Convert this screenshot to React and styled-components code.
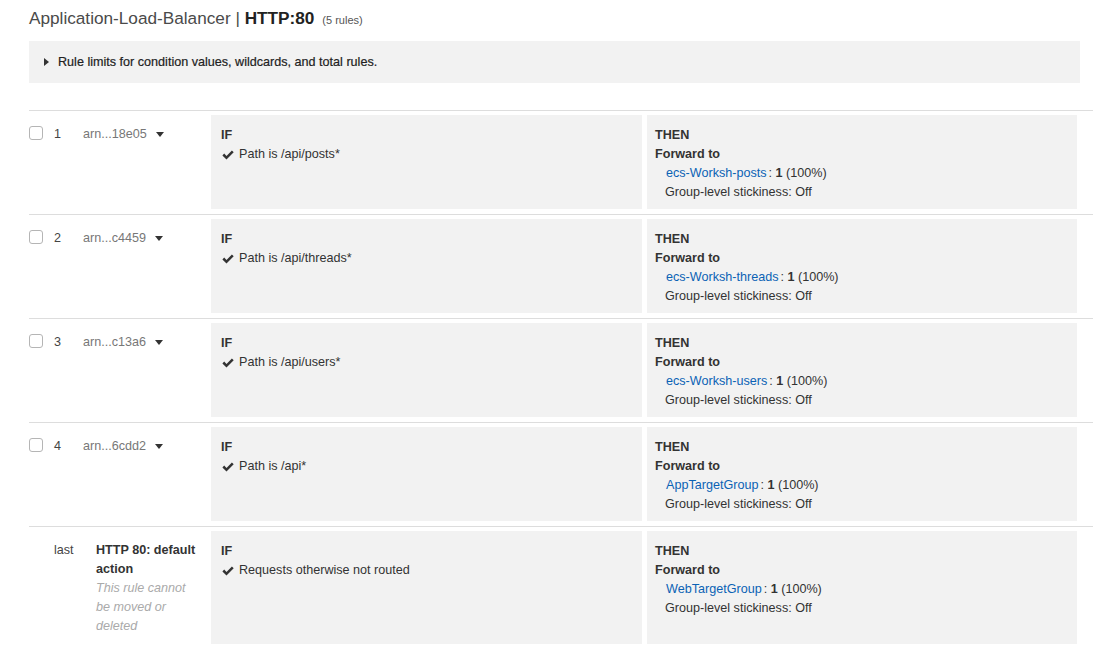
import styled, { createGlobalStyle } from "styled-components";

const GlobalStyle = createGlobalStyle`
  body {
    margin: 0;
    background: #fff;
    font-family: "Liberation Sans", Arial, Helvetica, sans-serif;
    color: #333;
  }
`;

const rules = [
  { num: "1", arn: "arn...18e05", path: "Path is /api/posts*", target: "ecs-Worksh-posts" },
  { num: "2", arn: "arn...c4459", path: "Path is /api/threads*", target: "ecs-Worksh-threads" },
  { num: "3", arn: "arn...c13a6", path: "Path is /api/users*", target: "ecs-Worksh-users" },
  { num: "4", arn: "arn...6cdd2", path: "Path is /api*", target: "AppTargetGroup" },
];

const Check = () => (
  <svg width="12" height="10" viewBox="0 0 12 10">
    <path d="M0.4 5.4 L2.2 3.6 L4.5 5.9 L9.9 0.5 L11.7 2.3 L4.5 9.5 Z" fill="#333" />
  </svg>
);

const Caret = () => (
  <svg width="8" height="5" viewBox="0 0 8 5">
    <path d="M0 0 H8 L4 5 Z" fill="#333" />
  </svg>
);

const App = () => {
  return (
    <Page>
      <GlobalStyle />
      <Title>
        Application-Load-Balancer | <b>HTTP:80</b>
        <small>(5 rules)</small>
      </Title>
      <InfoBox>
        <Triangle />
        Rule limits for condition values, wildcards, and total rules.
      </InfoBox>

      <Rules>
        {rules.map((r) => (
          <Row key={r.num}>
            <Meta>
              <Box />
              <Num>{r.num}</Num>
              <Arn>
                {r.arn}
                <Caret />
              </Arn>
            </Meta>
            <Cell>
              <Label>IF</Label>
              <Condition>
                <Check />
                {r.path}
              </Condition>
            </Cell>
            <Cell $then>
              <Label>THEN</Label>
              <Label>Forward to</Label>
              <Target>
                <a href="#">{r.target}</a>: <b>1</b> (100%)
              </Target>
              <Sticky>Group-level stickiness: Off</Sticky>
            </Cell>
          </Row>
        ))}
        <Row $last>
          <Meta $last>
            <Spacer />
            <Num $wide>last</Num>
            <DefaultName>
              <b>HTTP 80: default action</b>
              <em>This rule cannot be moved or deleted</em>
            </DefaultName>
          </Meta>
          <Cell>
            <Label>IF</Label>
            <Condition>
              <Check />
              Requests otherwise not routed
            </Condition>
          </Cell>
          <Cell $then>
            <Label>THEN</Label>
            <Label>Forward to</Label>
            <Target>
              <a href="#">WebTargetGroup</a>: <b>1</b> (100%)
            </Target>
            <Sticky>Group-level stickiness: Off</Sticky>
          </Cell>
        </Row>
      </Rules>
    </Page>
  );
};

export default App;

const Page = styled.div`
  padding: 7px 0 0 29px;
  font-size: 12.6px;
`;

const Title = styled.h1`
  display: flex;
  align-items: baseline;
  white-space: pre;
  height: 22px;
  margin: 0 0 12px;
  font-size: 17.2px;
  line-height: 22px;
  font-weight: normal;
  color: #4a4a4a;
  b {
    color: #222;
  }
  small {
    font-size: 11px;
    color: #555;
    margin-left: 8px;
  }
`;

const InfoBox = styled.div`
  width: 1051px;
  height: 42px;
  box-sizing: border-box;
  background: #f2f2f2;
  display: flex;
  align-items: center;
  padding-left: 15px;
  color: #222;
  -webkit-text-stroke: 0.2px #222;
`;

const Triangle = styled.span`
  width: 0;
  height: 0;
  border-top: 4px solid transparent;
  border-bottom: 4px solid transparent;
  border-left: 5px solid #333;
  margin-right: 9px;
`;

const Rules = styled.div`
  width: 1064px;
  margin-top: 27px;
`;

const Row = styled.div`
  display: grid;
  grid-template-columns: 177px 431px 430px;
  column-gap: 5px;
  border-top: 1px solid #ddd;
  padding: 4px 0 ${(p) => (p.$last ? "0" : "5px")};
  line-height: 19px;
`;

const Meta = styled.div`
  display: flex;
  align-items: flex-start;
  padding: 10px 0 ${(p) => (p.$last ? "8px" : "0")};
`;

const Box = styled.span`
  width: 14px;
  height: 14px;
  box-sizing: border-box;
  border: 1px solid #b5b5b5;
  border-radius: 3px;
  margin: 1px 11px 0 0;
  flex-shrink: 0;
`;

const Spacer = styled.span`
  width: 25px;
`;

const Num = styled.span`
  width: ${(p) => (p.$wide ? "42px" : "29px")};
  color: #444;
  flex-shrink: 0;
`;

const Arn = styled.span`
  display: flex;
  align-items: center;
  gap: 9px;
  color: #777;
`;

const DefaultName = styled.div`
  width: 104px;
  display: flex;
  flex-direction: column;
  b {
    color: #333;
  }
  em {
    color: #aaa;
  }
`;

const Cell = styled.div`
  background: #f2f2f2;
  min-height: 94px;
  box-sizing: border-box;
  padding: 11px 10px 0 ${(p) => (p.$then ? "8px" : "10px")};
`;

const Label = styled.div`
  font-weight: bold;
  color: #333;
`;

const Condition = styled.div`
  display: flex;
  align-items: center;
  gap: 5px;
  color: #333;
  svg {
    margin-left: 1px;
  }
`;

const Target = styled.div`
  padding-left: 11px;
  color: #333;
  a {
    color: #0b62b5;
    text-decoration: none;
    margin-right: 2px;
  }
`;

const Sticky = styled.div`
  padding-left: 10px;
  color: #333;
`;
